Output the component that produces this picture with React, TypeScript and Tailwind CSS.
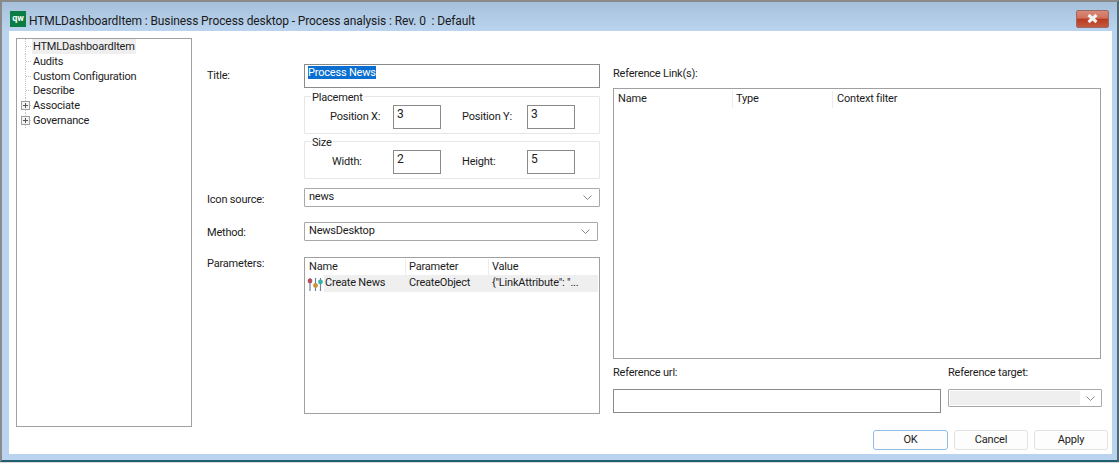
const font = "font-['Roboto','Noto_Sans',sans-serif]";

function TreeRow({ label, expandable, selected }: { label: string; expandable?: boolean; selected?: boolean }) {
  return (
    <div className="flex h-[14.8px] items-center">
      <svg width="15" height="15" className="shrink-0">
        <path d="M8.5 0V15" stroke="#c4c4c4" strokeDasharray="1 1" />
        <path d="M9 7.5H15" stroke="#c4c4c4" strokeDasharray="1 1" />
        {expandable && (
          <>
            <rect x="4.5" y="3.5" width="8" height="8" fill="#f4f4f4" stroke="#a0a0a0" />
            <path d="M6 7.5H11M8.5 5V10" stroke="#555" />
          </>
        )}
      </svg>
      <span className={`px-[1px] leading-[15px] ${selected ? "bg-[#efefef]" : ""}`}>{label}</span>
    </div>
  );
}

function NumField({ label, value, labelWidth }: { label: string; value: string; labelWidth: string }) {
  return (
    <div className="flex items-center">
      <span className={labelWidth}>{label}</span>
      <div className="h-[24px] w-[48px] border border-[#8a8a8a] bg-white pl-[3px] pt-[1px] text-[12px] leading-[15px]">{value}</div>
    </div>
  );
}

function Group({ title, children, className }: { title: string; children: React.ReactNode; className: string }) {
  return (
    <fieldset className={`rounded-[1px] border border-[#e6e6e6] px-[5px] ${className}`}>
      <legend className="ml-[1px] translate-y-[1px] px-[1px] leading-[13px] text-[#222]">{title}</legend>
      {children}
    </fieldset>
  );
}

function Select({ value, className }: { value: string; className: string }) {
  return (
    <div className={`flex h-[19px] items-center justify-between rounded-[1px] border border-[#a8a8a8] pl-[4px] pr-[7px] ${className}`}>
      <span>{value}</span>
      <Chevron />
    </div>
  );
}

function Chevron() {
  return (
    <svg width="9" height="5" viewBox="0 0 9 5" className="shrink-0">
      <path d="M0.5 0.5L4.5 4.5L8.5 0.5" fill="none" stroke="#8a8a8a" />
    </svg>
  );
}

function SlidersIcon() {
  return (
    <svg width="18" height="16" viewBox="0 0 18 16" className="shrink-0">
      <path d="M4 2V15" stroke="#6f7f9c" strokeWidth="1.2" />
      <path d="M9.5 2V15" stroke="#6f7f9c" strokeWidth="1.2" />
      <path d="M14.5 2V15" stroke="#6f7f9c" strokeWidth="1.2" />
      <circle cx="4" cy="5" r="2.4" fill="#b5505c" />
      <circle cx="9.5" cy="9.5" r="2.4" fill="#c9913a" />
      <circle cx="14.5" cy="6" r="2.4" fill="#2fb5b0" />
    </svg>
  );
}

function Button({ label, primary, className }: { label: string; primary?: boolean; className: string }) {
  return (
    <div
      className={`flex h-[20px] items-center justify-center rounded-[3px] border bg-[#fdfdfd] ${className} ${
        primary ? "border-[#8fbde6]" : "border-[#e2e2e2]"
      }`}
    >
      {label}
    </div>
  );
}

export default function App() {
  return (
    <div className={`${font} flex h-[463px] w-[1119px] flex-col overflow-hidden bg-[#d8d8d8] text-[11px] tracking-[-0.2px] text-[#1c1c1c]`}>
      <div className="flex h-[462px] flex-col border-b-2 border-l-2 border-r-2 border-t-2 border-b-[#1f5f70] border-l-[#8a8a8a] border-r-[#4a6a7a] border-t-[#8a8a8a] bg-[#bad4ef]">
        {/* title bar */}
        <div className="flex h-[29px] shrink-0 items-center bg-gradient-to-b from-[#a7c0da] to-[#bad4ef] pl-[8px] pr-[8px] pt-[4px]">
          <div className="flex h-[16px] w-[16px] items-center justify-center bg-[#0b7d43] text-[9px] font-bold leading-none text-white">qw</div>
          <span className="ml-[3px] pt-[4px] text-[12px] tracking-[-0.1px] text-[#1a1a1a]">HTMLDashboardItem : Business Process desktop - Process analysis : Rev. 0&nbsp; : Default</span>
          <div className="ml-auto flex h-[18px] w-[33px] items-center justify-center rounded-[2px] border border-[#9a6a66] bg-[linear-gradient(#d98a78_0%,#d0705c_45%,#b8391f_50%,#c4583e_100%)]">
            <svg width="13" height="11" viewBox="0 0 13 11">
              <path d="M2.5 2L10.5 9M10.5 2L2.5 9" stroke="#f2f2f2" strokeWidth="3" />
            </svg>
          </div>
        </div>

        {/* dialog body */}
        <div className="ml-[7px] mr-[5px] flex h-[423px] gap-[15px] bg-white pl-[7px] pt-[7px]">
          {/* tree */}
          <div className="h-[389px] w-[176px] shrink-0 border border-[#a0a0a0]">
            <TreeRow label="HTMLDashboardItem" selected />
            <TreeRow label="Audits" />
            <TreeRow label="Custom Configuration" />
            <TreeRow label="Describe" />
            <TreeRow label="Associate" expandable />
            <TreeRow label="Governance" expandable />
          </div>

          <div className="flex min-w-0 flex-1 flex-col">
            <div className="flex flex-1">
              {/* middle form */}
              <div className="flex w-[393px] shrink-0 flex-col pt-[26px]">
                <div className="flex">
                  <span className="w-[97px] pt-[4px]">Title:</span>
                  <div className="h-[24px] w-[296px] border border-[#8a8a8a] pl-[3px] leading-[15px]">
                    <span className="bg-[#0a6fd0] text-white">Process News</span>
                  </div>
                </div>
                <div className="ml-[97px] w-[296px]">
                  <Group title="Placement" className="mt-[2px] h-[44px]">
                    <div className="mt-[2px] flex gap-[21px] pl-[20px]">
                      <NumField label="Position X:" value="3" labelWidth="w-[63px]" />
                      <NumField label="Position Y:" value="3" labelWidth="w-[65px]" />
                    </div>
                  </Group>
                  <Group title="Size" className="mt-[1px] h-[44px]">
                    <div className="mt-[2px] flex gap-[21px] pl-[22px]">
                      <NumField label="Width:" value="2" labelWidth="w-[61px]" />
                      <NumField label="Height:" value="5" labelWidth="w-[65px]" />
                    </div>
                  </Group>
                </div>
                <div className="mt-[9px] flex items-start">
                  <span className="w-[97px] pt-[4px] leading-[15px]">Icon source:</span>
                  <Select value="news" className="w-[296px]" />
                </div>
                <div className="mt-[15px] flex items-start">
                  <span className="w-[97px] pt-[3px] leading-[16px]">Method:</span>
                  <Select value="NewsDesktop" className="w-[294px]" />
                </div>
                <div className="mt-[16px] flex">
                  <span className="-mt-[1px] w-[97px] leading-[15px]">Parameters:</span>
                  <div className="h-[157px] w-[296px] border border-[#a0a0a0] px-[1px]">
                    <div className="flex h-[17px] items-center pt-[2px]">
                      <span className="w-[100px] border-r border-[#ececec] pl-[3px]">Name</span>
                      <span className="w-[83px] border-r border-[#ececec] pl-[3px]">Parameter</span>
                      <span className="pl-[3px]">Value</span>
                    </div>
                    <div className="flex h-[17px] items-center">
                      <SlidersIcon />
                      <div className="flex h-full flex-1 items-center bg-[#efefef]">
                        <span className="w-[82px] pl-[1px]">Create News</span>
                        <span className="w-[83px] pl-[3px]">CreateObject</span>
                        <span className="pl-[3px]">{'{"LinkAttribute": "...'}</span>
                      </div>
                    </div>
                  </div>
                </div>
              </div>

              {/* right column */}
              <div className="ml-[13px] flex w-[489px] shrink-0 flex-col pt-[26px]">
                <span className="pt-[2px] leading-[15px]">Reference Link(s):</span>
                <div className="mt-[7px] h-[271px] w-[488px] border border-[#a0a0a0]">
                  <div className="flex h-[18px] items-center pl-[4px] pt-[3px]">
                    <span className="w-[115px] border-r border-[#ececec]">Name</span>
                    <span className="w-[100px] border-r border-[#ececec] pl-[3px]">Type</span>
                    <span className="pl-[4px]">Context filter</span>
                  </div>
                </div>
                <div className="mt-[6px] flex gap-[7px]">
                  <div className="w-[328px]">
                    <div className="leading-[15px]">Reference url:</div>
                    <div className="mt-[9px] h-[24px] border border-[#8a8a8a]" />
                  </div>
                  <div className="w-[154px]">
                    <div className="leading-[15px]">Reference target:</div>
                    <div className="mt-[9px] flex h-[18px] items-center rounded-[1px] border border-[#a8a8a8] pl-[1px] pr-[6px]">
                      <div className="h-[14px] flex-1 bg-[#efefef]" />
                      <div className="ml-[6px]">
                        <Chevron />
                      </div>
                    </div>
                  </div>
                </div>
              </div>
            </div>

            {/* buttons */}
            <div className="mb-[4px] mr-[4px] flex justify-end gap-[6px]">
              <Button label="OK" primary className="w-[75px]" />
              <Button label="Cancel" className="w-[74px]" />
              <Button label="Apply" className="w-[74px]" />
            </div>
          </div>
        </div>
      </div>
    </div>
  );
}
